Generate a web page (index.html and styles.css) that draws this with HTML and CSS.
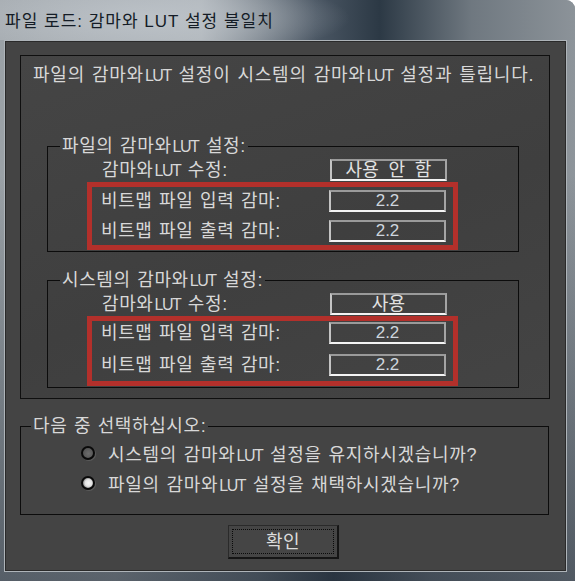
FILE: index.html
```html
<!DOCTYPE html>
<html lang="ko">
<head>
<meta charset="utf-8">
<title>파일 로드: 감마와 LUT 설정 불일치</title>
<link rel="stylesheet" href="styles.css">
</head>
<body>
<div class="window">
  <div class="titlebar"><span class="title">파일 로드: 감마와 LUT 설정 불일치</span></div>
  <div class="client">
    <div class="mainbox">
      <p class="message">파일의 감마와<span class="lat">LUT</span> 설정이 시스템의 감마와<span class="lat">LUT</span> 설정과 틀립니다.</p>

      <fieldset class="group">
        <legend>파일의 감마와<span class="lat">LUT</span> 설정:</legend>
        <div class="row row-top"><span class="label">감마와<span class="lat">LUT</span> 수정:</span><span class="value">사용 안 함</span></div>
        <div class="highlight">
          <div class="row"><span class="label">비트맵 파일 입력 감마:</span><span class="value num">2.2</span></div>
          <div class="row"><span class="label">비트맵 파일 출력 감마:</span><span class="value num">2.2</span></div>
        </div>
      </fieldset>

      <fieldset class="group group-second">
        <legend>시스템의 감마와<span class="lat">LUT</span> 설정:</legend>
        <div class="row row-top"><span class="label">감마와<span class="lat">LUT</span> 수정:</span><span class="value">사용</span></div>
        <div class="highlight">
          <div class="row"><span class="label">비트맵 파일 입력 감마:</span><span class="value num">2.2</span></div>
          <div class="row"><span class="label">비트맵 파일 출력 감마:</span><span class="value num">2.2</span></div>
        </div>
      </fieldset>
    </div>

    <fieldset class="choice">
      <legend>다음 중 선택하십시오:</legend>
      <label class="option"><span class="radio"></span><span>시스템의 감마와<span class="lat">LUT</span> 설정을 유지하시겠습니까?</span></label>
      <label class="option"><span class="radio radio-on"></span><span>파일의 감마와<span class="lat">LUT</span> 설정을 채택하시겠습니까?</span></label>
    </fieldset>

    <div class="actions">
      <button class="ok" type="button"><span class="focus">확인</span></button>
    </div>
  </div>
</div>
</body>
</html>
```

FILE: styles.css
```css
* { box-sizing: border-box; }

html, body {
  margin: 0;
  padding: 0;
  width: 575px;
  height: 581px;
  overflow: hidden;
  background: #ffffff;
}

body {
  font-family: "Liberation Sans", "Noto Sans CJK KR", sans-serif;
  font-size: 18px;
  color: #d8d8d8;
}

.lat {
  letter-spacing: -1.5px;
  margin-left: 1px;
  margin-right: 1px;
  font-size: 16px;
}

.window {
  width: 575px;
  height: 581px;
  border-top-right-radius: 9px;
  background:
    linear-gradient(180deg, rgba(0,0,0,0) 0%, rgba(0,0,0,0) 30%, rgba(30,40,52,0.55) 100%),
    linear-gradient(90deg, #9aa1a6 0%, #a3a9ae 20%, #6d7780 45%, #37434f 58%, #707982 75%, #8e959b 100%);
  display: flex;
  flex-direction: column;
}

.titlebar {
  height: 40px;
  padding-left: 5px;
  display: flex;
  align-items: center;
  background:
    radial-gradient(ellipse 200px 40px at 150px 18px, rgba(190,196,202,0.85), rgba(190,196,202,0) 100%),
    linear-gradient(90deg, #a7adb2 0%, #b0b6bb 35%, #4a5663 55%, #2c3945 66%, #6f7880 82%, #8c9399 100%);
  border-top-right-radius: 9px;
}

.title {
  color: #141c26;
  font-size: 17px;
  letter-spacing: 1px;
  margin-top: -2px;
}

.client {
  margin-left: 4px;
  width: 563px;
  height: 532px;
  background: #444444;
  border: 1px solid #aeb4b9;
  box-shadow: inset 1px 1px 0 #2a2a2a, inset -1px -1px 0 #2a2a2a;
  display: flex;
  flex-direction: column;
}

.mainbox {
  margin: 14px 0 0 15px;
  width: 530px;
  height: 344px;
  border: 1px solid #0f0f0f;
  background: linear-gradient(160deg, #454545 0%, #3f3f3f 55%, #444444 100%);
  display: flex;
  flex-direction: column;
}

.message {
  margin: 9px 0 0 12px;
  line-height: 20px;
  letter-spacing: 0.8px;
  word-spacing: 1px;
  white-space: nowrap;
}

fieldset {
  margin: 0;
  padding: 0;
  border: 1px solid #0c0c0c;
  min-width: 0;
}

legend {
  margin-left: 12px;
  padding: 0 2px;
  line-height: 20px;
  letter-spacing: 0.6px;
  word-spacing: 1px;
}

.group {
  margin: 50px 0 0 26px;
  width: 472px;
  padding-bottom: 1px;
}

.group-second {
  margin-top: 18px;
}

.row {
  height: 22px;
  display: flex;
  align-items: center;
  letter-spacing: 0.6px;
  word-spacing: 1px;
  white-space: nowrap;
}

.row-top {
  margin-top: 2px;
  padding-left: 54px;
}

.label {
  width: 228px;
  line-height: 20px;
}

.value {
  width: 117px;
  height: 22px;
  display: flex;
  align-items: center;
  justify-content: center;
  border-top: 2px solid #9a9a9a;
  border-left: 2px solid #c4c4c4;
  border-right: 2px solid #a4a4a4;
  border-bottom: 2px solid #f4f4f4;
  line-height: 18px;
  color: #e2e2e2;
  letter-spacing: 0.3px;
  word-spacing: 4px;
}

.num {
  color: #cfd6de;
  letter-spacing: 0;
  font-size: 17px;
}

.highlight {
  margin: 1px 0 0 39px;
  width: 371px;
  border: 5px solid #b3302b;
  padding: 3px 4px 3px 9px;
  display: flex;
  flex-direction: column;
  gap: 8px;
}

.group-second .highlight {
  padding-top: 1px;
  padding-bottom: 5px;
  gap: 10px;
}

.choice {
  margin: 17px 0 0 15px;
  width: 529px;
  padding: 7px 0 21px 0;
  display: flex;
  flex-direction: column;
  gap: 10px;
}

.choice legend {
  margin-left: 10px;
}

.option {
  height: 20px;
  margin-left: 60px;
  display: flex;
  align-items: center;
  gap: 13px;
  letter-spacing: 0.7px;
  word-spacing: 1px;
  white-space: nowrap;
}

.radio {
  width: 14px;
  height: 14px;
  border-radius: 50%;
  border: 2px solid #0a0a0a;
  background: radial-gradient(circle at 55% 55%, #6c6c6c 0%, #555555 70%, #3e3e3e 100%);
  box-shadow: 1px 1px 0 rgba(255,255,255,0.12);
  flex: none;
}

.radio-on {
  background: radial-gradient(circle at 55% 50%, #f6f6f6 0%, #e2e2e2 45%, #8a8a8a 75%, #4a4a4a 100%);
}

.actions {
  margin-top: 10px;
  display: flex;
  justify-content: center;
  padding-right: 4px;
}

.ok {
  width: 111px;
  height: 34px;
  padding: 3px;
  margin: 0;
  background: #454545;
  border-top: 1px solid #2a2a2a;
  border-left: 1px solid #2a2a2a;
  border-right: 2px solid #151515;
  border-bottom: 2px solid #151515;
  font-family: inherit;
  font-size: 18px;
  color: #dcdcdc;
  cursor: default;
  display: flex;
}

.focus {
  flex: 1;
  border: 1px dotted #0a0a0a;
  display: flex;
  align-items: center;
  justify-content: center;
  letter-spacing: 0.5px;
  line-height: 20px;
}
```
